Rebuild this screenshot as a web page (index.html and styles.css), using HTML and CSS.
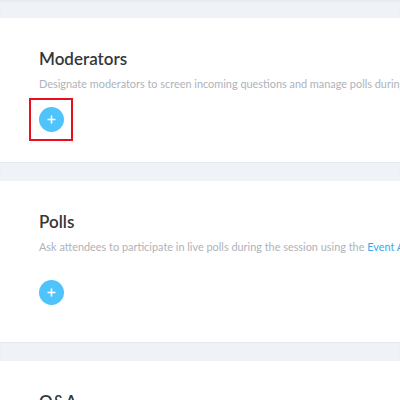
FILE: index.html
```html
<!DOCTYPE html>
<html>
<head>
<meta charset="utf-8">
<link rel="stylesheet" href="styles.css">
</head>
<body>
<div class="page">
  <section class="card card-mod">
    <h2 class="title">Moderators</h2>
    <p class="desc">Designate moderators to screen incoming questions and manage polls during the session.</p>
    <div class="add-wrap highlighted">
      <button class="add"><svg width="9" height="9" viewBox="0 0 9 9"><path d="M4.5 0.5v8M0.5 4.5h8" stroke="#fff" stroke-width="1.6"/></svg></button>
    </div>
  </section>
  <section class="card card-polls">
    <h2 class="title">Polls</h2>
    <p class="desc">Ask attendees to participate in live polls during the session using the <a class="link">Event App</a>.</p>
    <div class="add-wrap">
      <button class="add"><svg width="9" height="9" viewBox="0 0 9 9"><path d="M4.5 0.5v8M0.5 4.5h8" stroke="#fff" stroke-width="1.6"/></svg></button>
    </div>
  </section>
  <section class="card card-qa">
    <h2 class="title">Q&amp;A</h2>
  </section>
</div>
</body>
</html>
```
FILE: styles.css
```css
html, body {
  margin: 0;
  padding: 0;
  background: #eff2f6;
  overflow: hidden;
  width: 400px;
  height: 400px;
}
body {
  font-family: Lato, "Open Sans", sans-serif;
  box-shadow: inset 0 2px 2px rgba(0,0,0,0.03);
}
.page {
  display: flex;
  flex-direction: column;
  gap: 19px;
  padding-top: 18px;
}
.card {
  background: #fff;
  box-shadow: 0 1px 1px rgba(0,0,0,0.04);
  padding: 0 0 0 39px;
  white-space: nowrap;
  overflow: hidden;
}
.card-mod { height: 144px; }
.card-polls { height: 161px; }
.card-qa { height: 100px; }
.title {
  margin: 0;
  padding-top: 29px;
  font-size: 17px;
  line-height: 24px;
  font-weight: 600;
  color: #34373b;
}
.desc {
  margin: 5px 0 0;
  font-size: 10.9px;
  line-height: 16px;
  color: #aeb3b9;
}
.link { color: #3aa9ee; }
.add-wrap {
  margin-top: 6px;
  margin-left: -10px;
  width: 40px;
  height: 39px;
  display: flex;
  align-items: center;
  justify-content: center;
  border: 2px solid transparent;
}
.card-polls .add-wrap { margin-top: 16px; }
.highlighted { border-color: #e8101c; }
.add {
  width: 25px;
  height: 25px;
  border-radius: 50%;
  border: 0;
  padding: 0;
  background: #4fc3fb;
  display: flex;
  align-items: center;
  justify-content: center;
}
.add svg { display: block; }
```
